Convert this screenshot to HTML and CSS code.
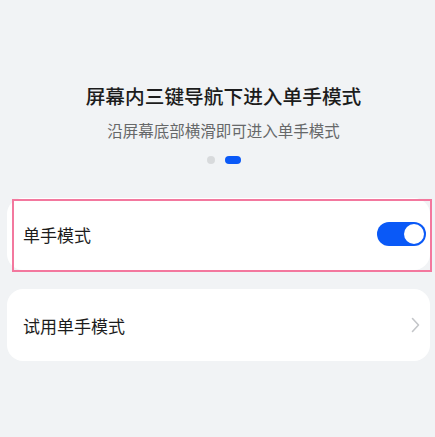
FILE: index.html
```html
<!DOCTYPE html>
<html lang="zh">
<head>
<meta charset="utf-8">
<link rel="stylesheet" href="styles.css">
</head>
<body>
<div class="page">
  <div class="intro">
    <h1 class="title">屏幕内三键导航下进入单手模式</h1>
    <p class="subtitle">沿屏幕底部横滑即可进入单手模式</p>
    <div class="dots"><span class="dot"></span><span class="dot active"></span></div>
  </div>
  <div class="list">
    <div class="card card-switch">
      <span class="label">单手模式</span>
      <span class="toggle"><span class="knob"></span></span>
      <span class="highlight"></span>
    </div>
    <div class="card card-link">
      <span class="label">试用单手模式</span>
      <svg class="chev" width="9" height="16" viewBox="0 0 9 16"><path d="M1.5 1.5 L7.5 8 L1.5 14.5" fill="none" stroke="#c4c6c9" stroke-width="1.6" stroke-linecap="round" stroke-linejoin="round"/></svg>
    </div>
  </div>
</div>
</body>
</html>
```

FILE: styles.css
```css
html, body {
  margin: 0;
  padding: 0;
}
body {
  background: #f1f3f5;
  font-family: "Noto Sans CJK SC", "Noto Sans", sans-serif;
  width: 435px;
  height: 437px;
  overflow: hidden;
}
.page {
  padding-top: 83px;
}
.intro {
  display: flex;
  flex-direction: column;
  align-items: center;
  padding-left: 12px;
}
.title {
  margin: 0;
  font-size: 19.7px;
  line-height: 26px;
  font-weight: 500;
  color: #1c1c1c;
}
.subtitle {
  margin: 11px 0 0;
  font-size: 15.5px;
  line-height: 20px;
  color: #666869;
}
.dots {
  margin-top: 16px;
  display: flex;
  gap: 10px;
  height: 8px;
}
.dot {
  width: 8px;
  height: 8px;
  border-radius: 4px;
  background: #d8dadc;
}
.dot.active {
  width: 16px;
  background: #0a59f7;
}
.list {
  margin: 34px 5px 0 7px;
  display: flex;
  flex-direction: column;
  gap: 19px;
}
.card {
  position: relative;
  background: #ffffff;
  border-radius: 16px;
  height: 72px;
  display: flex;
  align-items: center;
  justify-content: space-between;
  padding: 0 4px 0 16px;
}
.card-link {
  padding-right: 10px;
}
.label {
  font-size: 17px;
  color: #1c1c1c;
}
.toggle {
  width: 49px;
  height: 24px;
  border-radius: 12px;
  background: #0a59f7;
  display: flex;
  align-items: center;
  justify-content: flex-end;
  padding-right: 2px;
  box-sizing: border-box;
}
.knob {
  width: 20px;
  height: 20px;
  border-radius: 50%;
  background: #ffffff;
}
.highlight {
  position: absolute;
  left: 5px;
  top: 1px;
  width: 420px;
  height: 73px;
  border: 2.5px solid #f3789e;
  box-sizing: border-box;
  pointer-events: none;
}
.chev {
  display: block;
}
```
